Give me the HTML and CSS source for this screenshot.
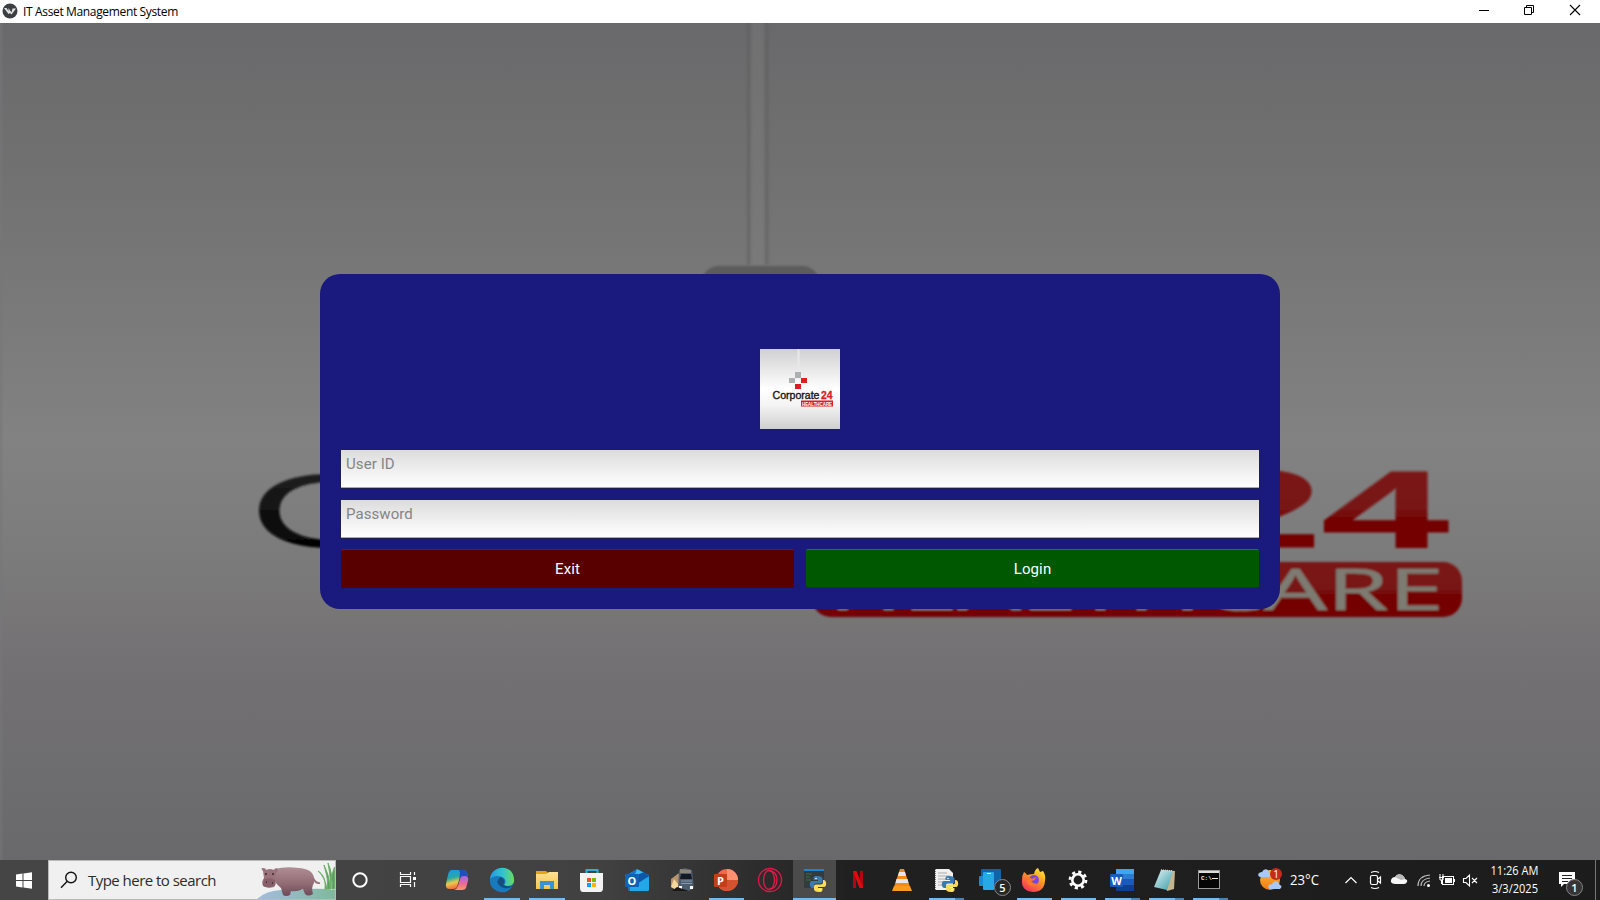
FILE: index.html
```html
<!DOCTYPE html>
<html lang="en">
<head>
<meta charset="utf-8">
<title>IT Asset Management System</title>
<link rel="stylesheet" href="styles.css">
</head>
<body>
<header class="titlebar">
  <svg class="app-icon" viewBox="0 0 16 16"><circle cx="8" cy="8" r="7.500" fill="#3b3f42"/><path d="M2 5H4.500L6.500 8V5L9.500 9.500L10.500 5.500H14L9.500 11.500L8 10L6.500 11Z" fill="#e4e4e4"/></svg>
  <span class="title">IT Asset Management System</span>
  <svg class="controls" viewBox="0 0 120 23" fill="none" stroke="#000"><path d="M0 10.500H10"/><path d="M45.500 7.500h7v7h-7zM47.500 7v-1.500h7v7h-1.500"/><path d="M91 5L101 15M101 5L91 15" stroke-width="1.100"/></svg>
</header>

<main class="stage">
  <svg class="backdrop" viewBox="0 23 1600 837">
    <defs>
      <linearGradient id="steel" x1="0" y1="0" x2="0" y2="1"><stop offset="0" stop-color="#69696b"/><stop offset=".2" stop-color="#737272"/><stop offset=".5" stop-color="#828282"/><stop offset=".64" stop-color="#7c7b7b"/><stop offset=".78" stop-color="#727072"/><stop offset="1" stop-color="#69696b"/></linearGradient>
      <linearGradient id="red" x1="0" y1="0" x2="0" y2="1"><stop offset="0" stop-color="#7b1919"/><stop offset=".48" stop-color="#781515"/><stop offset=".62" stop-color="#740202"/><stop offset="1" stop-color="#740202"/></linearGradient>
      <linearGradient id="digits" gradientUnits="userSpaceOnUse" x1="0" y1="-78" x2="0" y2="0"><stop offset="0" stop-color="#7b1919"/><stop offset=".5" stop-color="#781414"/><stop offset=".65" stop-color="#740202"/></linearGradient>
      <linearGradient id="ink" gradientUnits="userSpaceOnUse" x1="0" y1="-75" x2="0" y2="0"><stop offset="0" stop-color="#202020"/><stop offset="1" stop-color="#040404"/></linearGradient>
      <filter id="soft" x="-5%" y="-20%" width="110%" height="140%"><feGaussianBlur stdDeviation=".9"/></filter>
      <filter id="haze" x="-50%" y="-20%" width="200%" height="140%"><feGaussianBlur stdDeviation="1.800"/></filter>
    </defs>
    <rect y="23" width="1600" height="837" fill="url(#steel)"/>
    <path d="M1 23V860" stroke="#77777a" stroke-width="3" opacity=".5"/>
    <g filter="url(#haze)"><path d="M748.500 10V265M767 10V265" stroke="#5e5e5f" stroke-width="3" opacity=".65"/><path d="M757.500 10V265" stroke="#828282" stroke-width="12" opacity=".3"/></g>
    <rect x="701" y="266" width="119" height="40" rx="18" fill="#5b5c5c" filter="url(#soft)"/>
    <g filter="url(#soft)">
      <text class="word" transform="translate(248 546.500) scale(2.080 1)" font-size="104" fill="url(#ink)">C</text>
      <text class="num" transform="translate(1195 547) scale(2.080 1)" x="0 60.800" font-size="110" fill="url(#digits)" stroke="url(#digits)">24</text>
      <rect x="812" y="562" width="650" height="55" rx="19" fill="url(#red)"/>
      <text class="care" x="829" y="610" font-size="56" textLength="615" lengthAdjust="spacingAndGlyphs">HEALTHCARE</text>
    </g>
  </svg>

  <form class="card">
    <svg class="logo" viewBox="0 0 80 80">
      <defs><linearGradient id="silver" x1="0" y1="0" x2="0" y2="1"><stop offset="0" stop-color="#d0d0d2"/><stop offset=".5" stop-color="#fff"/><stop offset=".7" stop-color="#f4f4f4"/><stop offset="1" stop-color="#cfcfd1"/></linearGradient></defs>
      <rect width="80" height="80" fill="url(#silver)"/>
      <path d="M38.500 0V23" stroke="#e8e8e8" stroke-width="2"/>
      <path d="M35 23h6v6h-6zM29 29h6v5h-6z" fill="#adb0b0"/><path d="M41 29h6v5h-6zM35 35h6v5h-6z" fill="#dc1d23"/>
      <text class="mini-word" x="12.500" y="50" textLength="47" lengthAdjust="spacingAndGlyphs">Corporate</text>
      <text class="mini-num" x="61" y="50" textLength="11.500" lengthAdjust="spacingAndGlyphs">24</text>
      <rect x="41" y="51.500" width="32" height="6" fill="#de1c22"/>
      <text class="mini-care" x="42" y="56.600" textLength="30" lengthAdjust="spacingAndGlyphs">HEALTHCARE</text>
    </svg>
    <div class="field">User ID</div>
    <div class="field">Password</div>
    <div class="actions"><div class="btn exit">Exit</div><div class="btn login">Login</div></div>
  </form>
</main>

<footer class="taskbar">
  <div class="start"><svg width="16" height="17" viewBox="0 0 16 17"><path d="M0 2.500L6.500 1.500V8H0zM7.500 1.400L16 .3V8H7.500zM0 9h6.500v6.500L0 14.500zM7.500 9H16v7.700L7.500 15.600z" fill="#fff"/></svg></div>
  <div class="search">
    <svg class="lens" viewBox="0 0 18 18" fill="none" stroke="#111" stroke-width="1.400"><circle cx="11" cy="6.500" r="5.300"/><path d="M7.300 10.300L1 16.800"/></svg>
    <span class="search-text">Type here to search</span>
    <svg class="hippo" viewBox="0 0 78 38">
      <defs><linearGradient id="hide" x1="0" y1="0" x2="0" y2="1"><stop offset="0" stop-color="#b08d95"/><stop offset=".55" stop-color="#936d76"/><stop offset="1" stop-color="#6d4a57"/></linearGradient><linearGradient id="bank"><stop offset="0" stop-color="#a3bce0"/><stop offset="1" stop-color="#80b99d"/></linearGradient></defs>
      <path d="M0 38Q8 30 24 29L52 28Q64 27 78 29V38Z" fill="url(#bank)"/>
      <path d="M68 28C69 19 66 13 61 10Q68 16 70 28C72 19 68 9 67 4Q73 15 73 28C74 15 72 9 71 2Q76 13 75 28L77.500 28V6Q74 14 74 28Z" fill="#55a15b" stroke="#6caf6a"/>
      <path d="M18 8Q28 5 42 7C56 8 58 15 57 22Q54 26 56 33Q51 36 48 33L46 28Q40 31 34 30L33 34Q29 36 26 34L24 27C15 20 15 12 18 8Z" fill="url(#hide)"/>
      <path d="M56 17Q59 23 63 22" stroke="#96707a" stroke-width="1.800" fill="none"/>
      <path d="M6 10Q3 7 6 7Q9 7 9 9Q13 7 17 9Q18 6 21 8Q21 11 19 12L18 19Q20 23 17 26Q11 28 6 25Q4 21 7 17Z" fill="#99727c"/>
      <path d="M7 18Q12 16 18 19Q19 25 14 26Q7 27 6 24Z" fill="#865f6b"/><path d="M8 13h2M15 13h2M9 21h1M15 22h1" stroke="#3b2731" stroke-width="1.600"/>
    </svg>
  </div>
  <svg class="icons" viewBox="336 860 1264 40">
    <defs>
      <linearGradient id="cop" x1="0" y1="0" x2=".3" y2="1"><stop offset="0" stop-color="#1696f0"/><stop offset=".45" stop-color="#28a9a2"/><stop offset=".7" stop-color="#ecc94b"/><stop offset="1" stop-color="#f26a3d"/></linearGradient>
      <linearGradient id="cop2" x1="0" y1="0" x2="0" y2="1"><stop offset="0" stop-color="#a765eb"/><stop offset=".6" stop-color="#f06d91"/><stop offset="1" stop-color="#ff9b63"/></linearGradient>
      <linearGradient id="edge"><stop offset="0" stop-color="#239bdf"/><stop offset=".55" stop-color="#33c4cf"/><stop offset="1" stop-color="#6bdc58"/></linearGradient>
      <linearGradient id="fold" x1="0" y1="0" x2="0" y2="1"><stop offset="0" stop-color="#ffe191"/><stop offset="1" stop-color="#f5c54e"/></linearGradient>
      <linearGradient id="fox" x1=".8" y1="0" x2=".2" y2="1"><stop offset="0" stop-color="#ffe83b"/><stop offset=".4" stop-color="#ff9a22"/><stop offset="1" stop-color="#f42b5d"/></linearGradient>
      <linearGradient id="sheet" x1="0" y1="0" x2="1" y2="1"><stop offset="0" stop-color="#e2f5f5"/><stop offset="1" stop-color="#399baa"/></linearGradient>
      <linearGradient id="sun" x1="0" y1="0" x2="0" y2="1"><stop offset="0" stop-color="#ffbd37"/><stop offset="1" stop-color="#ef7615"/></linearGradient>
      <g id="py"><path d="M-1 -8C-5 -8 -4.500 -6 -4.500 -4H0V-3H-6C-9 -3 -9 4 -5.500 4H-4V1.500Q-4 -.5 -2 -.5H2.500Q4.500 -.5 4.500 -2.500V-5Q4.500 -8 -1 -8Z" fill="#397bad"/><path d="M1 8C5 8 4.500 6 4.500 4H0V3H6C9 3 9 -4 5.500 -4H5V-2Q5 .5 2.500 .5H-2Q-4 .5 -4 2.500V5Q-4 8 1 8Z" fill="#ffdc58"/><circle cx="-2" cy="-5.500" r=".8" fill="#fff"/><circle cx="2" cy="5.500" r=".8" fill="#fff"/></g>
    </defs>
    <rect x="793" y="860" width="43" height="40" fill="#4b4b4b"/>
    <g fill="#76b9ed"><path d="M484 898h36v2h-36zM529 898h36v2h-36zM709 898h35v2h-35zM793 898h43v2h-43zM929 898h26v2h-26zM1017 898h35v2h-35zM1061 898h35v2h-35zM1105 898h26v2h-26zM1149 898h26v2h-26zM1193 898h26v2h-26z"/><path d="M955 898h9v2h-9zM1131 898h9v2h-9zM1175 898h9v2h-9zM1219 898h9v2h-9z" fill="#5283ad"/></g>
    <circle cx="360" cy="880" r="6.700" fill="none" stroke="#fff" stroke-width="2"/>
    <g fill="none" stroke="#fff" stroke-width="1.200"><path d="M400.500 872v2.500h10V872M400.500 887v-2.500h10v2.500M400.500 876.500h10v6h-10zM414.500 872v3M414.500 882v5"/><path d="M413 878.500h3" stroke-width="3"/></g>
    <path d="M452 870h11q3 0 4 3l1 3h-5q-3 0-4 4l-2 7q-1 2-4 2h-3q-5 0-4-5l2-9q1-5 4-5Z" fill="url(#cop)"/><path d="M463 876h2q4 0 3 5l-2 7q-1 2-4 2h-8q3-1 4-4l2-7q1-3 3-3Z" fill="url(#cop2)"/><path d="M459 870h4q3 0 4 3l1 3h-5q-3 0-4 4l1-7z" fill="#244cc0"/>
    <circle cx="502" cy="880" r="12" fill="#1769b5"/><path d="M490 879C491 865 513 863 514 879C515 886 508 887 504 885C508 880 503 876 498 877C494 878 491 881 490 879Z" fill="url(#edge)"/><path d="M490 879Q495 874 501 877Q495 880 499 885Q504 891 512 887Q506 895 497 891Q489 887 490 879Z" fill="#167abd"/><path d="M501 877Q495 881 499 885Q505 891 512 886Q507 887 503 885Q506 880 501 877Z" fill="#174c7b"/>
    <path d="M536 871h10l2 2h9v16h-21z" fill="#e8a50d"/><path d="M536 874h10l3-2h9v17h-22z" fill="url(#fold)"/><path d="M540 881h14v8h-4v-4h-6v4h-4z" fill="#3d91cf"/>
    <path d="M586.500 875v-5h11v5" fill="none" stroke="#32acd8" stroke-width="2"/><path d="M580 873h23v15q0 4-3 4h-17q-3 0-3-4z" fill="#f3f3f3"/><path fill="#f15124" d="M587 878h4v4h-4z"/><path fill="#7dba00" d="M592 878h4v4h-4z"/><path fill="#00a4ef" d="M587 883h4v4h-4z"/><path fill="#ffb900" d="M592 883h4v4h-4z"/>
    <path d="M628 874l9-5 12 6v14q0 2-2 2h-17q-2 0-2-2z" fill="#1a75c9"/><path d="M637 869l7 4-9 10 14-6v12q0 2-2 2h-17l2-8z" fill="#39bff4"/><path d="M629 883l20-6v12q0 2-2 2h-16z" fill="#22a8e8"/><path d="M637 875l7-3 5 4-12 8z" fill="#0d57a6"/><rect x="625" y="874" width="14" height="13" rx="1" fill="#0f62b6"/><text x="632" y="884.500" class="letter" text-anchor="middle">O</text>
    <path d="M671 879l8-6v16l-8-2z" fill="#b9936b"/><path d="M671 887l3-8 4 5v7z" fill="#f5d79a"/><path d="M679 870l6-2 7 2 2 18-5 3h-11z" fill="#4e5c70"/><path d="M680 869l11 1v3h-11z" fill="#8c857a"/><path d="M681 874h10l1 5h-12z" fill="#141a22"/><path d="M681 881h11M681 883.500h11" stroke="#8298ad"/><path d="M679 886h3v3h-3zM690 886h3v3h-3z" fill="#fff"/><path d="M672 891l5-4 12 4z" fill="#1b1714"/>
    <circle cx="727" cy="880" r="11" fill="#ed6c47"/><path d="M727 869a11 11 0 0 1 11 11H727z" fill="#ff9070"/><path d="M738 880a11 11 0 0 1-20 6l9-6z" fill="#d35230"/><rect x="714" y="874" width="13" height="13" rx="1" fill="#c43e1c"/><text x="720.500" y="884.500" class="letter" text-anchor="middle">P</text>
    <g fill="none" stroke="#e31948" stroke-width="1.300"><circle cx="770" cy="880" r="11.500"/><ellipse cx="769" cy="880" rx="5.500" ry="9.500"/><path d="M769 870.500q8 1 8 9.500t-8 9.500"/></g>
    <path d="M804 869h20v19h-20z" fill="#343b3d"/><path d="M804 869h20v2h-20z" fill="#1787d8"/><path d="M806 874h6M806 877h4M806 880h5" stroke="#347441"/><use href="#py" x="818" y="884"/>
    <path d="M853 871h3v17h-3zM860 871h3v17h-3z" fill="#b20710"/><path d="M853 871h3.500l6.500 17h-3.500z" fill="#e50914"/>
    <path d="M900 869h4l6 18h-16z" fill="#f58a16"/><path d="M899 872h6l1 4h-8zM896.500 879h11l1 4h-13z" fill="#e7e7e7"/><path d="M894 886h16l2 5h-20z" fill="#fa9b1d"/>
    <path d="M935 869h14l4 4v17h-18z" fill="#f0f0f0"/><path d="M938 873h9M938 876h12M938 879h9M938 882h6M938 885h5" stroke="#aaa"/><path d="M935.500 869v21" stroke="#777" stroke-dasharray="1 1"/><use href="#py" x="950" y="884"/>
    <rect x="981" y="869" width="20" height="16" rx="1" fill="#1163a9"/><rect x="979" y="876" width="9" height="10" rx="1" fill="#1c8bd2"/><rect x="983" y="872" width="11" height="18" rx="1" fill="#27a9e8"/><path d="M987 873.500h4" stroke="#c6efff"/><circle cx="1002.500" cy="887.500" r="8" fill="#282828" stroke="#888"/><text x="1002.500" y="891.500" class="count" text-anchor="middle">5</text>
    <path d="M1024 872q2 1 3 3q4-1 7-1q1-5 4-6l2 4 3-1q3 4 2 10q-1 11-12 11q-12-1-11-12q0-5 2-8Z" fill="url(#fox)"/><circle cx="1034" cy="880" r="5" fill="#7b48df"/><path d="M1025 877q5 0 7 2l4-2q-1 4-5 4q3 4 7 2q-5 6-10 1z" fill="#ff762c"/>
    <g fill="none" stroke="#fff"><circle cx="1078" cy="880" r="5.700" stroke-width="2.600"/><circle cx="1078" cy="880" r="8" stroke-width="2.800" stroke-dasharray="3.142 3.142"/></g>
    <path d="M1116 869h18v5h-18z" fill="#41a5ee"/><path d="M1116 874h18v5h-18z" fill="#2b7cd3"/><path d="M1116 879h18v6h-18z" fill="#185abd"/><path d="M1116 885h18v6h-18z" fill="#103f91"/><rect x="1110" y="874" width="13" height="13" rx="1" fill="#185abd"/><text x="1116.500" y="884.500" class="letter" text-anchor="middle">W</text>
    <path d="M1162 870l13 1-1 18-7 2z" fill="#c2b58f"/><path d="M1161 870l12 1-6 19-13-3z" fill="url(#sheet)"/><path d="M1161 870l12 1" stroke="#ddd" stroke-width="1.500" stroke-dasharray="1 1"/>
    <rect x="1198.500" y="870.500" width="21" height="18" fill="#050505" stroke="#999"/><path d="M1199 872h20" stroke="#ddd" stroke-width="2"/><text x="1201" y="879.500" class="dos">C:\</text><path d="M1212 878.500h6" stroke="#eee"/>
    <circle cx="1270" cy="880" r="10" fill="url(#sun)"/><path d="M1260 877q-3-1-1-4q2-1 3-1q2-4 6-2q1 2 1 3q3 0 1 4zM1270 889q-3-1-1-4q2-1 3-1q2-4 6-2q1 2 2 3q3 1 0 4z" fill="#a9c8f5"/><circle cx="1276" cy="874" r="6" fill="#c42b1c"/><text x="1276" y="878" class="alert" text-anchor="middle">1</text>
    <text x="1290" y="885" class="temp" textLength="29" lengthAdjust="spacingAndGlyphs">23°C</text>
    <g fill="none" stroke="#fff" stroke-width="1.200"><path d="M1345.500 883l5.500-5.500 5.500 5.500"/><rect x="1370.500" y="875.500" width="7" height="9" rx="1.500"/><path d="M1378 879l2.500-2v6l-2.500-2M1371 872.500q4-2 8 0M1371 887.500q4 2 8 0"/></g>
    <path d="M1396 884q-6 0-5-4q1-3 4-3q2-4 7-2q2 1 3 4q3 1 2 3q-1 2-3 2z" fill="#f6f6f6"/><path d="M1395 877q3-4 7-2q3 2 3 4l-4 1z" fill="#b9b9b9"/>
    <g fill="none" stroke="#bbb" stroke-width="1.200"><path d="M1418 886q0-10 12-11M1421 886q0-7 9-8M1424 886q0-4 6-5"/></g><circle cx="1428.500" cy="885.500" r="1.500" fill="#fff"/>
    <g fill="none" stroke="#fff"><rect x="1442.500" y="876.500" width="11" height="8"/><path d="M1454.500 879v3M1440 874v3M1443 874v3M1439 877.500h5M1440 878v2h3v-2M1441.500 880v4"/></g><path d="M1445 878h7v5h-7z" fill="#fff"/>
    <path d="M1463.500 878.500h2.500l3.500-3.500v11l-3.500-3.500h-2.500zM1472 878l5 5M1477 878l-5 5" fill="none" stroke="#fff" stroke-width="1.100"/>
    <text x="1490.500" y="875" class="clock" textLength="48" lengthAdjust="spacingAndGlyphs">11:26 AM</text><text x="1492" y="893" class="clock" textLength="46" lengthAdjust="spacingAndGlyphs">3/3/2025</text>
    <path d="M1559 872h16v12h-11l-3 3v-3h-2z" fill="#fff"/><path d="M1562 875.500h10M1562 878.500h10M1562 881.500h6" stroke="#222"/><circle cx="1574.500" cy="887.500" r="8" fill="#353535" stroke="#858585"/><text x="1574.500" y="891.500" class="count" text-anchor="middle">1</text>
    <path d="M1595.500 860v40" stroke="#777"/>
  </svg>
</footer>
</body>
</html>
```
FILE: styles.css
```css
* { box-sizing: border-box; }
body { margin: 0; width: 1600px; height: 900px; overflow: hidden; display: flex; flex-direction: column; font-family: "Open Sans", "Noto Sans", sans-serif; }
svg { display: block; }
.titlebar { height: 23px; flex: none; background: #fff; display: flex; align-items: center; padding-left: 2px; }
.app-icon { width: 16px; height: 16px; margin-top: -1px; }
.title { margin-left: 5px; font-size: 12px; line-height: 22px; letter-spacing: -0.35px; color: #000; }
.controls { width: 120px; height: 23px; margin-left: auto; margin-right: 1px; }
.stage { height: 837px; flex: none; display: grid; justify-items: center; align-items: start; overflow: hidden; }
.backdrop { grid-area: 1 / 1; width: 1600px; height: 837px; }
.word { font-family: "Liberation Sans", sans-serif; }
.num { font-family: "Liberation Sans", sans-serif; font-weight: 700; stroke-width: 1px; }
.care { font-family: "Open Sans", sans-serif; fill: #7d7b72; stroke: #7d7b72; stroke-width: .6px; }
.card { grid-area: 1 / 1; z-index: 1; width: 960px; height: 335px; margin: 251px 0 0; padding: 75px 21px 21px; border-radius: 20px; background: #19197e; display: flex; flex-direction: column; align-items: stretch; }
.logo { width: 80px; height: 80px; margin: 0 auto 21px; flex: none; }
.mini-word { font: 10px "Liberation Sans", sans-serif; fill: #151515; stroke: #151515; stroke-width: .35px; }
.mini-num { font: bold 10px "Liberation Sans", sans-serif; fill: #dc1d23; stroke: #dc1d23; stroke-width: .3px; }
.mini-care { font: bold 6px "Liberation Sans", sans-serif; fill: #fff; }
.field { height: 38px; flex: none; margin-bottom: 12px; padding: 1px 0 0 5px; font: 15px/27px Roboto, sans-serif; letter-spacing: .08px; color: #848484; background: linear-gradient(#dcdcdc, #fff); border-bottom: 1px solid #aaa; box-shadow: 0 0 0 1px #20204c; }
.actions { display: grid; grid-template-columns: 1fr 1fr; gap: 12px; margin-top: -1px; }
.btn { height: 39px; border-radius: 2px; text-align: center; font: 15px/38px Roboto, sans-serif; letter-spacing: .12px; color: #fff; }
.exit { background: #580000; border-top: 1px solid #820b2e; border-bottom: 1px solid #2c0c30; }
.login { background: #005800; border-top: 1px solid #08833b; border-bottom: 1px solid #083a30; }
.taskbar { height: 40px; flex: none; display: flex; background: linear-gradient(90deg, #454545 0, #414141 600px, #303030 730px, #202020 850px, #1c1c1c 1600px); }
.start { width: 48px; display: flex; align-items: center; justify-content: center; }
.search { width: 288px; height: 40px; background: #f0f0f0; border: 1px solid #b9b9b9; display: flex; align-items: center; }
.lens { width: 18px; height: 18px; margin-left: 11px; }
.search-text { margin-left: 10px; font-size: 15px; letter-spacing: -0.53px; color: #2b2b2b; white-space: nowrap; }
.hippo { width: 78px; height: 38px; margin-left: auto; flex: none; }
.icons { width: 1264px; height: 40px; }
.letter { font: bold 11px "Open Sans", sans-serif; fill: #fff; }
.count { font: 600 11px "Open Sans", sans-serif; fill: #fff; }
.dos { font: bold 6px "Liberation Mono", monospace; fill: #eee; }
.alert { font: 10px "Open Sans", sans-serif; fill: #fff; }
.temp { font: 14px "Open Sans", sans-serif; fill: #fff; }
.clock { font: 12px "Open Sans", sans-serif; fill: #fff; }
```
